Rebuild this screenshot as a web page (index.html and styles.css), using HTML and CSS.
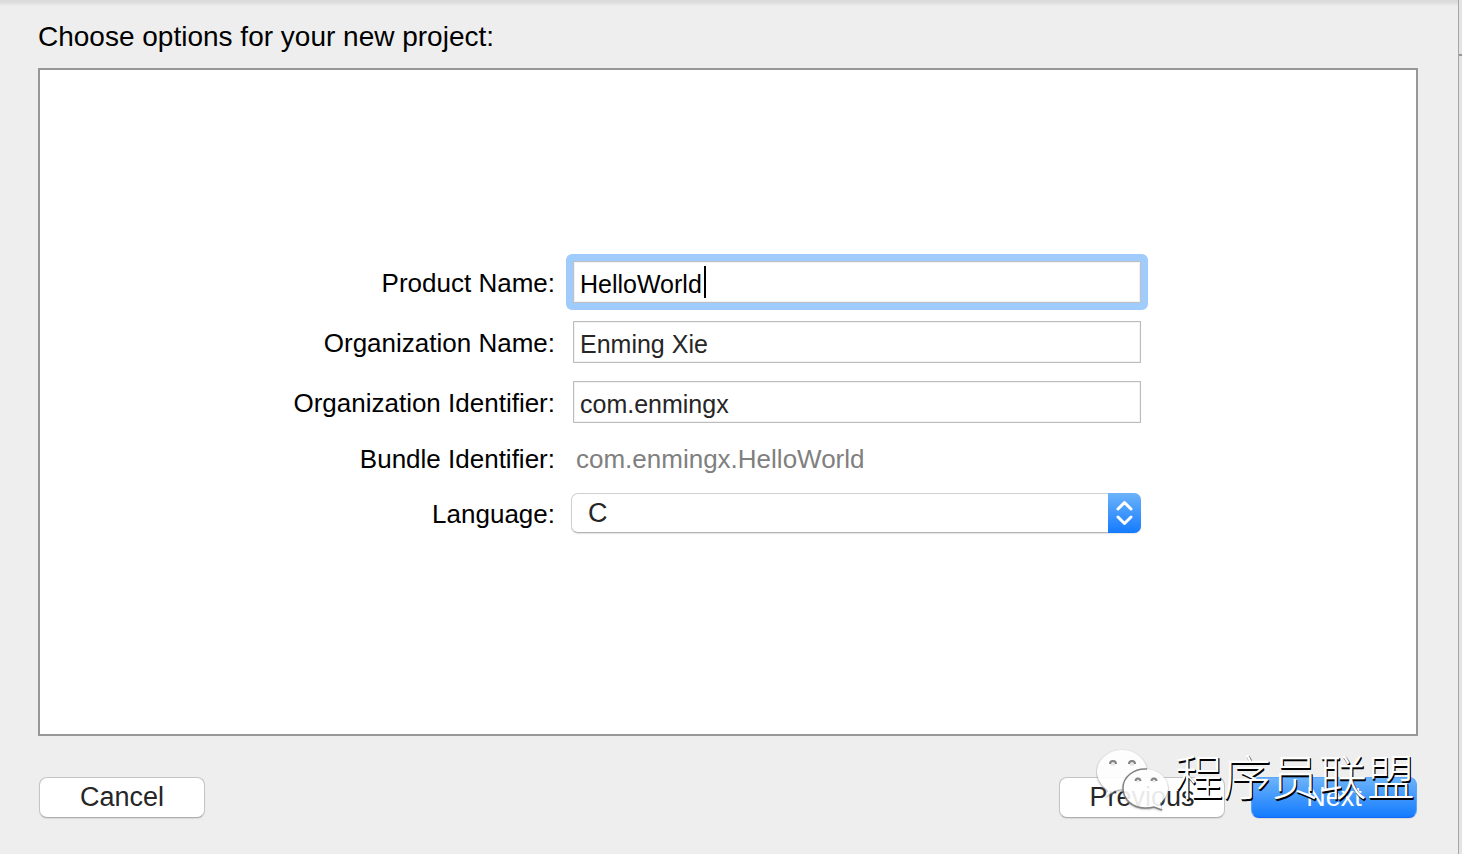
FILE: index.html
```html
<!DOCTYPE html>
<html lang="en">
<head>
  <meta charset="UTF-8" />
  <meta name="viewport" content="width=device-width, initial-scale=1.0"/>
  <title>New Project</title>
  <link rel="stylesheet" href="styles.css">
</head>
<body>
  <main class="sheet">
    <h1 class="sheet-title">Choose options for your new project:</h1>

    <!-- Project options -->
    <form class="options" id="options">
      <label for="product">Product Name:</label>
      <div class="field focused">
        <input type="text" id="product" value="HelloWorld">
        <span class="caret"></span>
      </div>

      <label for="orgName">Organization Name:</label>
      <div class="field">
        <input type="text" id="orgName" value="Enming Xie">
      </div>

      <label for="orgId">Organization Identifier:</label>
      <div class="field">
        <input type="text" id="orgId" value="com.enmingx">
      </div>

      <label for="bundleId">Bundle Identifier:</label>
      <output class="bundle" id="bundleId">com.enmingx.HelloWorld</output>

      <label for="language">Language:</label>
      <div class="field popup">
        <select id="language">
          <option>C</option>
        </select>
        <svg class="popup-arrows" viewBox="0 0 33 40" aria-hidden="true">
          <path d="M10 16 L16.5 9.5 L23 16 M10 24 L16.5 30.5 L23 24"/>
        </svg>
      </div>
    </form>

    <!-- Buttons -->
    <footer class="actions">
      <button type="button">Cancel</button>
      <div class="actions-right">
        <button type="button">Previous</button>
        <button type="submit" form="options" class="primary">Next</button>
        <div class="watermark">
          <svg class="bubbles" viewBox="0 0 74 72" aria-hidden="true">
            <path class="bubble" d="M26 8 C12 8 1 18 1 30 C1 36 4 41 8 45 L12 49 L9 55 L18 49 C20 48 24 47 30 47 C43 47 51 40 51 30 C51 18 40 8 26 8 Z"/>
            <path class="bubble" d="M49 27 C36 27 27 36 27 46 C27 57 36 66 49 66 C52 66 55 66 58 65 L66 68 L64 61 C69 57 72 52 72 46 C72 36 62 27 49 27 Z"/>
            <path class="rim" d="M51 27 C38 26 27 35 27 46 C27 57 36 66 49 66 C52 66 55 66 58 65 L66 68"/>
            <g class="eyes">
              <circle cx="17" cy="21" r="3"/>
              <circle cx="36" cy="21" r="3"/>
              <circle cx="42" cy="38" r="2.5"/>
              <circle cx="58" cy="38" r="2.5"/>
            </g>
            <path class="lids" d="M14 22 A3 3 0 0 1 20 22 M33 22 A3 3 0 0 1 39 22 M39.5 39 A2.5 2.5 0 0 1 44.5 39 M55.5 39 A2.5 2.5 0 0 1 60.5 39"/>
          </svg>
          <span lang="zh-CN">程序员联盟</span>
        </div>
      </div>
    </footer>
  </main>
  <div class="window-edge"></div>
</body>
</html>
```

FILE: styles.css
```css
* {
  margin: 0;
  padding: 0;
  box-sizing: border-box;
}
body {
  display: flex;
  min-height: 100vh;
  background: #eeeeee;
  color: #000000;
  font-family: "Liberation Sans", Arial, sans-serif;
  font-size: 26px;
}

.sheet {
  flex: 1;
  display: flex;
  flex-direction: column;
  padding: 21px 40px 36px 38px;
  background: linear-gradient(#dcdcdc, #dcdcdc 2px, #e4e4e4 4px, #eeeeee 6px);
}
.sheet-title {
  margin-bottom: 15px;
  font-size: 28px;
  font-weight: normal;
  line-height: 32px;
}

/* Strip of the window behind the sheet */
.window-edge {
  width: 4px;
  border-left: 1px solid #a6a6a6;
  background: linear-gradient(#e4e4e4 54px, #979797 54px, #979797 56px, #e4e4e4 56px);
}

/* Options form */
.options {
  flex: 1;
  display: grid;
  grid-template-columns: 515fr 568fr 257fr;
  grid-template-rows: 42px 42px 42px 34px 40px;
  gap: 18px;
  align-content: center;
  align-items: center;
  padding-bottom: 10px;
  background: #ffffff;
  border: 2px solid #979797;
}
.options label {
  grid-column: 1;
  padding-top: 2px;
  text-align: right;
  line-height: 30px;
}
.field {
  position: relative;
  display: flex;
}
.field input {
  width: 100%;
  height: 42px;
  padding: 4px 6px 0;
  border: 1px solid #bcbcbc;
  box-shadow: inset 0 0 0 1px #f2f2f2;
  background: #ffffff;
  color: #262626;
  font: inherit;
  font-size: 25px;
  outline: none;
}
.focused input {
  border-color: #bfc0c2;
  color: #000000;
  caret-color: transparent;
}
.focused::before {
  content: "";
  position: absolute;
  inset: -7px;
  border: 7px solid #9fccfd;
  border-radius: 6px;
  pointer-events: none;
}
.caret {
  position: absolute;
  left: 131px;
  top: 5px;
  width: 2px;
  height: 32px;
  background: #000000;
}
.bundle {
  padding: 2px 0 0 3px;
  color: #808080;
  line-height: 30px;
}

/* Pop-up menu */
.popup {
  margin-left: -2px;
}
.popup select {
  appearance: none;
  width: 100%;
  height: 40px;
  padding: 0 40px 0 16px;
  border: 1px solid #d0d0d0;
  border-bottom-color: #b4b4b4;
  border-radius: 7px;
  box-shadow: 0 1px 1px #e4e4e4;
  background: #ffffff;
  color: #262626;
  font: inherit;
  font-size: 27px;
}
.popup-arrows {
  position: absolute;
  right: 0;
  top: 0;
  width: 33px;
  height: 40px;
  border-radius: 0 7px 7px 0;
  background: linear-gradient(#6cb3fa, #147bff);
  fill: none;
  stroke: #ffffff;
  stroke-width: 3;
  stroke-linecap: round;
  stroke-linejoin: round;
  pointer-events: none;
}

/* Buttons */
.actions {
  display: flex;
  justify-content: space-between;
  margin-top: 41px;
  padding-left: 1px;
}
.actions-right {
  position: relative;
  display: flex;
  gap: 26px;
  padding-right: 1px;
}
button {
  width: 166px;
  height: 41px;
  border: 1px solid #c4c4c4;
  border-bottom-color: #adadad;
  border-radius: 8px;
  box-shadow: 0 1px 1px #dadada;
  background: #ffffff;
  color: #262626;
  font: inherit;
  font-size: 27px;
}
button.primary {
  border-color: #5aa5f5;
  border-bottom-color: #0f66f5;
  background: linear-gradient(#6cb3fa, #147bff);
  color: #ffffff;
}

/* Watermark over the buttons */
.watermark {
  position: absolute;
  right: 3px;
  bottom: 4px;
  display: flex;
  align-items: flex-start;
  gap: 5px;
  color: #ffffff;
  font-family: "Noto Sans CJK SC", sans-serif;
  font-size: 48px;
  font-weight: 200;
  line-height: 64px;
  white-space: nowrap;
  text-shadow: 1px 1px 0 #000000, 1px 2px 0 #000000;
  pointer-events: none;
}
.bubbles {
  width: 74px;
  height: 72px;
  opacity: 0.9;
}
.bubble {
  fill: #ffffff;
  filter: drop-shadow(0 1px 1px #888888);
}
.rim {
  fill: none;
  stroke: #777777;
  stroke-width: 1.5;
}
.eyes {
  fill: #e8e8e8;
}
.lids {
  fill: none;
  stroke: #777777;
  stroke-width: 2;
}
```
